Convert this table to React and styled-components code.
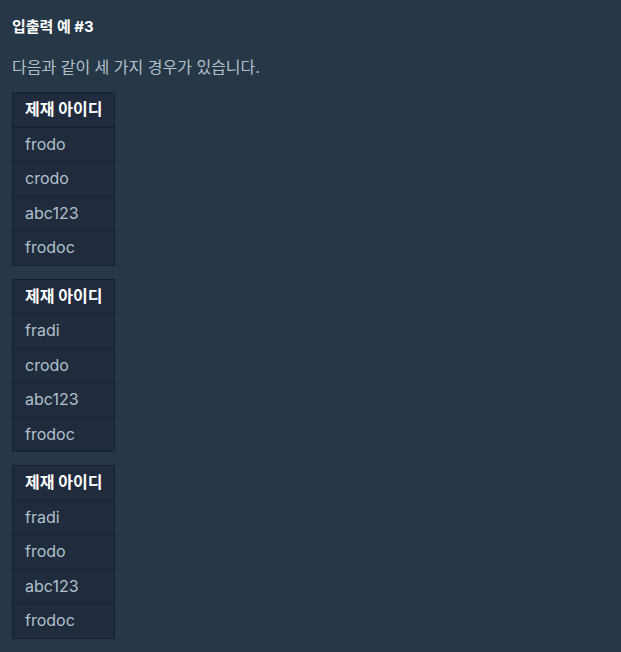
import React from 'react';
import styled, { createGlobalStyle } from 'styled-components';

const GlobalStyle = createGlobalStyle`
  html, body {
    margin: 0;
    padding: 0;
    background: #263747;
  }
  body {
    font-family: Inter, "Noto Sans CJK KR", sans-serif;
  }
`;

const cases = [
  ['frodo', 'crodo', 'abc123', 'frodoc'],
  ['fradi', 'crodo', 'abc123', 'frodoc'],
  ['fradi', 'frodo', 'abc123', 'frodoc'],
];

const App = () => (
  <>
    <GlobalStyle />
    <Page>
      <Title>입출력 예 #3</Title>
      <Description>다음과 같이 세 가지 경우가 있습니다.</Description>
      <Tables>
        {cases.map((ids, i) => (
          <Table key={i}>
            <thead>
              <tr>
                <HeadCell>제재 아이디</HeadCell>
              </tr>
            </thead>
            <tbody>
              {ids.map((id, j) => (
                <tr key={j}>
                  <Cell>{id}</Cell>
                </tr>
              ))}
            </tbody>
          </Table>
        ))}
      </Tables>
    </Page>
  </>
);

const Page = styled.div`
  padding: 16px 12px;
  color: #b2c0cc;
`;

const Title = styled.h5`
  margin: 0 0 17px;
  font-size: 15px;
  line-height: 22px;
  font-weight: 700;
  color: #ffffff;
`;

const Description = styled.p`
  margin: 0 0 13px;
  font-size: 16px;
  line-height: 24px;
  color: #b2c0cc;
`;

const Tables = styled.div`
  display: flex;
  flex-direction: column;
  align-items: flex-start;
  gap: 13px;
`;

const Table = styled.table`
  border-collapse: collapse;
  background: #202b3d;
  border: 1px solid #172030;
`;

const HeadCell = styled.th`
  text-align: left;
  padding: 6px 12px;
  font-size: 16px;
  line-height: 21.5px;
  font-weight: 700;
  color: #ffffff;
  border-bottom: 1px solid #172030;
`;

const Cell = styled.td`
  padding: 6px 12px;
  font-size: 16px;
  line-height: 21.5px;
  color: #b2c0cc;
  border-top: 1px solid #172030;
`;

export default App;
